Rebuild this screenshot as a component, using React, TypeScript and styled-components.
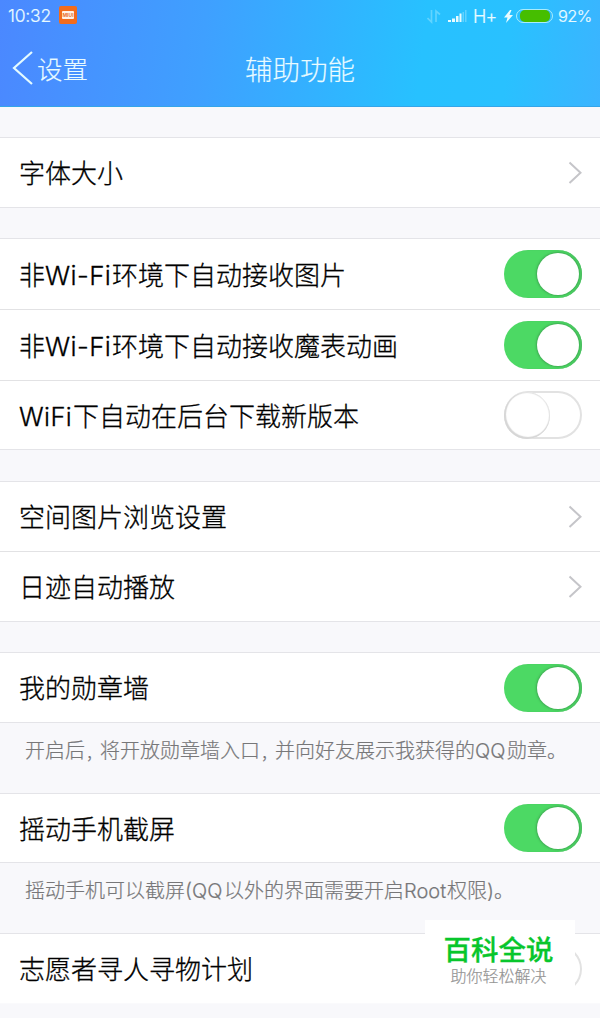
import React from "react";
import styled, { createGlobalStyle } from "styled-components";

const GlobalStyle = createGlobalStyle`
  * { box-sizing: border-box; }
  body {
    margin: 0;
    background: #f8f8fb;
    font-family: "Noto Sans CJK SC", sans-serif;
    font-weight: 300;
  }
`;

const Screen = styled.main`
  position: relative;
  width: 600px;
  height: 1018px;
  overflow: hidden;
  background: #f8f8fb;
`;

const Header = styled.header`
  height: 107px;
  color: #e9fbff;
  background: linear-gradient(97deg, #4b88ff 0%, #3fa0ff 34%, #27c1ff 70%, #29c1ff 84%, #3bb4ff 100%);
  border-bottom: 1px solid #35a5e8;
`;

const StatusBar = styled.div`
  display: flex;
  align-items: center;
  justify-content: space-between;
  height: 32px;
  padding: 0 9px 0 8px;
  font: 300 17px/32px Inter, sans-serif;
  -webkit-text-stroke: 0.2px currentColor;
`;

const StatusGroup = styled.div`
  display: flex;
  align-items: center;
`;

const Clock = styled.span`
  width: 51px;
  font-size: 17.5px;
  letter-spacing: -0.2px;
`;

const Network = styled.span`
  width: 31px;
  margin-left: 4px;
  padding-top: 1px;
  font-size: 18px;
  letter-spacing: -0.8px;
`;

const Percent = styled.span`
  width: 33px;
  margin-left: 5px;
  font-size: 16.5px;
  letter-spacing: -0.6px;
`;

const AppBadge = styled.span`
  display: flex;
  align-items: center;
  justify-content: center;
  width: 18px;
  height: 18px;
  margin-bottom: 2px;
  border-radius: 2px;
  background: #f36c1c;
`;

const BadgeLabel = styled.span`
  width: 12px;
  height: 8px;
  border-radius: 1px;
  background: #fff3e8;
  color: #e8722c;
  font: 700 5px/8px Inter, sans-serif;
  text-align: center;
  -webkit-text-stroke: 0;
`;

const Battery = styled.span`
  width: 37px;
  height: 14px;
  margin-left: 3px;
  padding: 0 2px 0 3px;
  border: 1.5px solid #a9ecfb;
  border-radius: 7px;
`;

const BatteryLevel = styled.span`
  display: block;
  height: 100%;
  border-radius: 5px;
  background: #46be00;
`;

const NavBar = styled.nav`
  display: grid;
  grid-template-columns: 200px 200px 200px;
  align-items: center;
  height: 72px;
  -webkit-text-stroke: 0.15px currentColor;
`;

const BackButton = styled.div`
  display: flex;
  align-items: center;
  padding-left: 12px;
  font-size: 25.5px;
  line-height: 38px;
`;

const Title = styled.h1`
  margin: 0;
  font-size: 27.5px;
  font-weight: 300;
  line-height: 38px;
  text-align: center;
`;

const Group = styled.section<{ $gap: number; $last?: boolean }>`
  margin-top: ${(p) => p.$gap}px;
  border-top: 1px solid #e4e4e8;
  border-bottom: 1px solid ${(p) => (p.$last ? "#fafafc" : "#e4e4e8")};
  background: #fff;
`;

const Row = styled.div<{ $height: number }>`
  display: flex;
  align-items: center;
  justify-content: space-between;
  height: ${(p) => p.$height}px;
  padding: 0 18px 0 19px;

  & + & {
    border-top: 1px solid #e2e2e4;
  }
`;

const Label = styled.span`
  padding-bottom: 1px;
  color: #000;
  font-size: 26px;
  font-weight: 300;
  line-height: 38px;
  white-space: nowrap;
  -webkit-text-stroke: 0.3px currentColor;
`;

const Latin = styled.span<{ $width: number; $size: number; $spacing?: number }>`
  display: inline-block;
  width: ${(p) => p.$width}px;
  font-family: Inter, sans-serif;
  font-size: ${(p) => p.$size}px;
  line-height: 1;
  letter-spacing: ${(p) => p.$spacing ?? 0}px;
`;

const Track = styled.span<{ $on: boolean }>`
  display: flex;
  flex: none;
  align-items: center;
  justify-content: ${(p) => (p.$on ? "flex-end" : "flex-start")};
  width: 78px;
  height: 48px;
  padding: ${(p) => (p.$on ? "0 3px" : "0")};
  border-radius: 24px;
  background: ${(p) => (p.$on ? "#4cd964" : "#fff")};
  box-shadow: ${(p) => (p.$on ? "inset -1px 0 1px #4dbb62" : "inset 0 0 0 2px #e2e2e2")};
`;

const Knob = styled.span<{ $on: boolean }>`
  width: ${(p) => (p.$on ? 42 : 46)}px;
  height: ${(p) => (p.$on ? 42 : 47)}px;
  border-radius: 50%;
  background: #fff;
  box-shadow: ${(p) => (p.$on ? "0 0 2px 1px rgba(50, 125, 65, 0.5)" : "inset 1px -1px 1px 1px #d6d6d6, inset 0 0 1px 1px #e4e4e4")};
`;

const Note = styled.p`
  height: 70px;
  margin: 0;
  padding: 12px 0 0 25px;
  color: #777779;
  font-size: 20px;
  font-weight: 300;
  line-height: 30px;
  white-space: nowrap;
  -webkit-text-stroke: 0.2px currentColor;
`;

const Comma = styled.span`
  display: inline-block;
  width: 15px;
  padding-left: 2px;
`;

const Watermark = styled.aside`
  position: absolute;
  top: 920px;
  left: 425px;
  width: 150px;
  height: 74px;
  padding: 10px 3px 0 0;
  background: #fff;
  text-align: center;
`;

const Brand = styled.div`
  color: #08c62c;
  font-size: 27.5px;
  font-weight: 500;
  line-height: 36px;
  -webkit-text-stroke: 0.3px currentColor;
`;

const Tagline = styled.div`
  color: #949494;
  font-size: 16px;
  font-weight: 300;
  line-height: 18px;
  -webkit-text-stroke: 0.2px currentColor;
`;

const Chevron = () => (
  <svg width="14" height="24" viewBox="0 0 14 24" fill="none" stroke="#c5c5c9" strokeWidth="2">
    <path d="M1.5 1.5 12.5 11.7 1.5 22" />
  </svg>
);

const BackArrow = () => (
  <svg width="25" height="36" viewBox="0 0 25 36" fill="none" stroke="#e4fbff" strokeWidth="2.2">
    <path d="M20 2 2 18 20 34" />
  </svg>
);

const Signal = () => (
  <svg width="42" height="16" viewBox="0 0 42 16">
    <g fill="none" stroke="#7bdcff" strokeWidth="1.7" opacity=".7">
      <path d="M4.5 2v12L.5 10M9 14V3l4 3.5" />
    </g>
    <g fill="#e8fbff">
      <path d="M21 12h3v2h-3zM25 10.5h3V14h-3zM29 8h2.5v6H29z" />
      <path d="M32.5 5.5h2V14h-2z" />
      <path d="M35.5 4h1.5v10h-1.5zM38 2h1.5v12H38z" opacity=".3" />
    </g>
  </svg>
);

const Bolt = () => (
  <svg width="9" height="15" viewBox="0 0 9 15" fill="#e8fbff">
    <path d="M6 1 0 8.5h3.5L2 14l7-8H5.5L7.5 1z" />
  </svg>
);

const Switch = ({ on = false }: { on?: boolean }) => (
  <Track $on={on} role="switch" aria-checked={on}>
    <Knob $on={on} />
  </Track>
);

export default function App() {
  return (
    <Screen lang="zh-CN">
      <GlobalStyle />
      <Header>
        <StatusBar>
          <StatusGroup>
            <Clock>10:32</Clock>
            <AppBadge><BadgeLabel>MIUI</BadgeLabel></AppBadge>
          </StatusGroup>
          <StatusGroup>
            <Signal />
            <Network>H+</Network>
            <Bolt />
            <Battery><BatteryLevel /></Battery>
            <Percent>92%</Percent>
          </StatusGroup>
        </StatusBar>
        <NavBar>
          <BackButton><BackArrow />设置</BackButton>
          <Title>辅助功能</Title>
        </NavBar>
      </Header>

      <Group $gap={30}>
        <Row $height={69}><Label>字体大小</Label><Chevron /></Row>
      </Group>

      <Group $gap={30}>
        <Row $height={70}>
          <Label>非<Latin $width={67} $size={26} $spacing={0.4}>Wi-Fi</Latin>环境下自动接收图片</Label>
          <Switch on />
        </Row>
        <Row $height={71}>
          <Label>非<Latin $width={67} $size={26} $spacing={0.4}>Wi-Fi</Latin>环境下自动接收魔表动画</Label>
          <Switch on />
        </Row>
        <Row $height={69}>
          <Label><Latin $width={54} $size={25.5} $spacing={0.4}>WiFi</Latin>下自动在后台下载新版本</Label>
          <Switch />
        </Row>
      </Group>

      <Group $gap={31}>
        <Row $height={69}><Label>空间图片浏览设置</Label><Chevron /></Row>
        <Row $height={70}><Label>日迹自动播放</Label><Chevron /></Row>
      </Group>

      <Group $gap={30}>
        <Row $height={69}><Label>我的勋章墙</Label><Switch on /></Row>
      </Group>
      <Note>
        开启后<Comma>,</Comma>将开放勋章墙入口<Comma>,</Comma>并向好友展示我获得的<Latin $width={32} $size={20}>QQ</Latin>勋章。
      </Note>

      <Group $gap={0}>
        <Row $height={68}><Label>摇动手机截屏</Label><Switch on /></Row>
      </Group>
      <Note>
        摇动手机可以截屏<Latin $width={39} $size={20}>(QQ</Latin>以外的界面需要开启<Latin $width={43} $size={20}>Root</Latin>权限<Latin $width={7} $size={20}>)</Latin>。
      </Note>

      <Group $gap={0} $last>
        <Row $height={69}><Label>志愿者寻人寻物计划</Label><Switch /></Row>
      </Group>

      <Watermark>
        <Brand>百科全说</Brand>
        <Tagline>助你轻松解决</Tagline>
      </Watermark>
    </Screen>
  );
}
